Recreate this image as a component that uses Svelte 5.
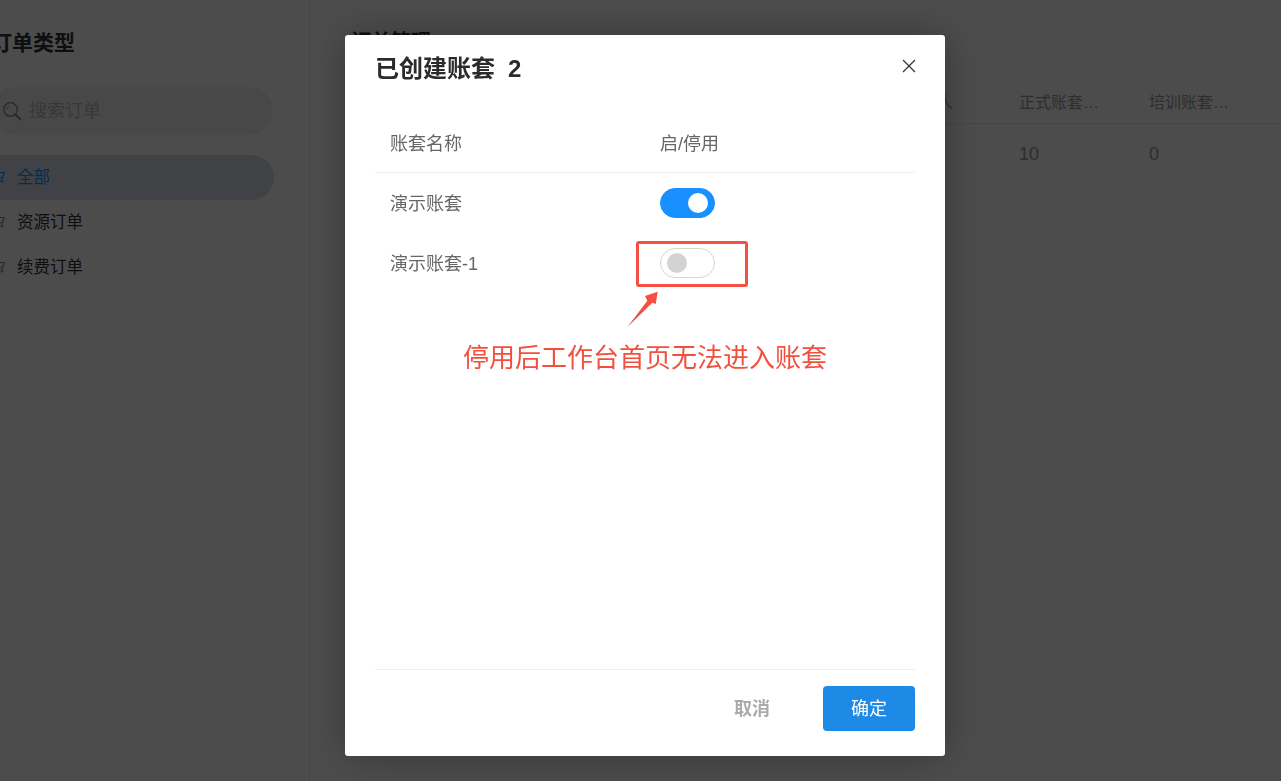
<script lang="ts">
	let books = $state([
		{ name: '演示账套', enabled: true },
		{ name: '演示账套-1', enabled: false }
	]);

	const sideItems = [
		{ label: '全部', active: true },
		{ label: '资源订单', active: false },
		{ label: '续费订单', active: false }
	];

	const columns = ['主联系人', '正式账套…', '培训账套…', '日'];
	const values = ['', '10', '0', ''];
</script>

<svelte:head>
	<title>已创建账套</title>
</svelte:head>

<div class="page">
	<aside class="sidebar">
		<h2 class="side-title">订单类型</h2>
		<div class="search">
			<svg class="search-icon" width="20" height="20" viewBox="0 0 20 20" fill="none">
				<circle cx="8.5" cy="8.5" r="6.8" stroke="currentColor" stroke-width="1.3" />
				<path d="M13.5 13.5l5 5" stroke="currentColor" stroke-width="1.8" stroke-linecap="round" />
				<path d="M4.8 8.5c0-1.6.8-2.8 2-3.4" stroke="currentColor" stroke-width="1" />
			</svg>
			<span>搜索订单</span>
		</div>
		<ul class="side-list">
			{#each sideItems as item}
				<li class="side-item" class:active={item.active}>
					<svg width="16" height="16" viewBox="0 0 16 16" fill="none">
						<path d="M1 2.5h2.5l1.5 7.5h7.5l1.5-5.5H4" stroke="currentColor" stroke-width="1.2" />
						<circle cx="6" cy="13" r="1.2" stroke="currentColor" />
						<circle cx="12" cy="13" r="1.2" stroke="currentColor" />
					</svg>
					<span>{item.label}</span>
				</li>
			{/each}
		</ul>
	</aside>

	<main class="content">
		<h1 class="content-title">订单管理</h1>
		<div class="table-row table-head">
			{#each columns as col}
				<div class="cell">{col}</div>
			{/each}
		</div>
		<div class="table-row table-body">
			{#each values as value}
				<div class="cell">{value}</div>
			{/each}
		</div>
	</main>
</div>

<div class="overlay">
	<div class="modal">
		<header class="modal-head">
			<h3 class="modal-title">已创建账套<span class="count">2</span></h3>
			<button type="button" class="close" aria-label="关闭">
				<svg width="14" height="14" viewBox="0 0 14 14" fill="none">
					<path d="M1 1l12 12M13 1L1 13" stroke="currentColor" stroke-width="1.2" />
				</svg>
			</button>
		</header>

		<div class="books">
			<div class="book-row book-head">
				<div class="book-name">账套名称</div>
				<div>启/停用</div>
			</div>
			{#each books as book}
				<div class="book-row">
					<div class="book-name"><span class="lift">{book.name}</span></div>
					<button
						type="button"
						class="switch"
						class:on={book.enabled}
						role="switch"
						aria-checked={book.enabled}
						aria-label={book.name}
						onclick={() => (book.enabled = !book.enabled)}
					>
						<span class="knob"></span>
					</button>
				</div>
			{/each}
		</div>

		<footer class="modal-foot">
			<button type="button" class="btn btn-cancel">取消</button>
			<button type="button" class="btn btn-ok">确定</button>
		</footer>

		<!-- Red annotation drawn over the dialog -->
		<div class="mark-box"></div>
		<svg class="mark-arrow" width="40" height="44" viewBox="0 0 40 44">
			<polygon points="0.3,39.3 20.3,12.7 18,8 30.7,3.7 28.7,16 25.3,14.7" fill="#f44f42" />
		</svg>
		<p class="mark-text">停用后工作台首页无法进入账套</p>
	</div>
</div>

<style>
	:global(body) {
		margin: 0;
		background: #fff;
		font-family: 'Liberation Sans', 'Noto Sans CJK SC', sans-serif;
	}

	.page {
		display: flex;
		height: 100vh;
		overflow: hidden;
		color: #333;
	}

	.sidebar {
		flex: 0 0 310px;
		box-sizing: border-box;
		border-right: 1px solid #e6e6e6;
		overflow: hidden;
	}

	.side-title {
		margin: 28px 0 0 -9px;
		font-size: 21px;
		line-height: 30px;
		font-weight: 700;
	}

	.search {
		display: flex;
		align-items: center;
		gap: 7px;
		width: 283px;
		height: 48px;
		margin: 29px 0 0 -10px;
		padding: 0 0 0 12px;
		box-sizing: border-box;
		border-radius: 24px;
		background: #f0f0f0;
		color: #bbb;
		font-size: 18px;
	}

	.search span {
		margin-top: -4px;
	}

	.search-icon {
		color: #888;
		flex-shrink: 0;
	}

	.side-list {
		list-style: none;
		margin: 20px 0 0;
		padding: 0;
	}

	.side-item {
		display: flex;
		align-items: center;
		gap: 11px;
		width: 284px;
		height: 45px;
		margin-left: -10px;
		box-sizing: border-box;
		border-radius: 0 23px 23px 0;
		font-size: 16.5px;
		padding: 0 0 3px 10px;
	}

	.side-item svg {
		flex-shrink: 0;
		color: #888;
		margin-left: -10px;
	}

	.side-item.active {
		background: #d6deec;
		color: #1890ff;
	}

	.side-item.active svg {
		color: #1890ff;
	}

	.content {
		flex: 1;
		min-width: 0;
		padding-left: 41px;
		overflow: hidden;
	}

	.content-title {
		margin: 28px 0 0;
		font-size: 20px;
		line-height: 28px;
		font-weight: 700;
	}

	.table-row {
		display: flex;
		padding-left: 538px;
		white-space: nowrap;
	}

	.cell {
		flex: 0 0 130px;
		font-size: 16px;
	}

	.table-head {
		margin-top: 31px;
		height: 36px;
		line-height: 32px;
		border-bottom: 1px solid #e8e8e8;
		color: #999;
	}

	.table-body {
		height: 60px;
		line-height: 60px;
		color: #999;
	}

	.table-body .cell {
		font-size: 18px;
	}

	.overlay {
		position: fixed;
		inset: 0;
		background: rgba(0, 0, 0, 0.7);
	}

	.modal {
		position: absolute;
		left: 345px;
		top: 35px;
		width: 600px;
		height: 721px;
		box-sizing: border-box;
		padding: 0 30px 25px;
		display: flex;
		flex-direction: column;
		background: #fff;
		border-radius: 3px;
		box-shadow: 0 0 40px rgba(0, 0, 0, 0.3);
		color: #666;
	}

	.modal-head {
		display: flex;
		align-items: center;
		justify-content: space-between;
		height: 62px;
	}

	.modal-title {
		margin: 0;
		font-size: 24px;
		font-weight: 700;
		color: #2b2b2b;
	}

	.count {
		margin-left: 13px;
	}

	.close {
		display: flex;
		margin: 0;
		padding: 0;
		border: none;
		background: none;
		color: #333;
		cursor: pointer;
		position: relative;
		left: 1px;
	}

	.books {
		flex: 1;
		margin-top: 18px;
	}

	.book-row {
		display: flex;
		align-items: center;
		height: 60px;
		font-size: 18px;
	}

	.book-head {
		height: 58px;
		box-sizing: border-box;
		padding-bottom: 4px;
		border-bottom: 1px solid #eee;
	}

	.lift {
		display: block;
		margin-top: -2px;
	}

	.book-name {
		flex: 0 0 270px;
		padding-left: 15px;
	}

	.switch {
		position: relative;
		width: 55px;
		height: 30px;
		padding: 0;
		box-sizing: border-box;
		border: 1px solid #d5d5d5;
		border-radius: 15px;
		background: #fff;
		cursor: pointer;
	}

	.switch.on {
		border-color: #1890ff;
		background: #1890ff;
	}

	.knob {
		position: absolute;
		left: 6px;
		top: 4px;
		width: 20px;
		height: 20px;
		border-radius: 50%;
		background: #d3d3d3;
	}

	.switch.on .knob {
		left: 27px;
		background: #fff;
	}

	.modal-foot {
		display: flex;
		justify-content: flex-end;
		gap: 25px;
		padding-top: 16px;
		border-top: 1px solid #eee;
	}

	.btn {
		width: 92px;
		height: 45px;
		padding: 0 0 4px;
		border: none;
		border-radius: 4px;
		font: inherit;
		font-size: 18px;
		cursor: pointer;
	}

	.btn-cancel {
		background: none;
		color: #aaa;
		font-weight: 700;
	}

	.btn-ok {
		background: #1d8ae6;
		color: #fff;
	}

	.mark-box {
		position: absolute;
		left: 291px;
		top: 206px;
		width: 112px;
		height: 46px;
		box-sizing: border-box;
		border: 3px solid #f44f42;
		border-radius: 3px;
	}

	.mark-arrow {
		position: absolute;
		left: 282px;
		top: 253px;
	}

	.mark-text {
		position: absolute;
		left: 118px;
		top: 304px;
		margin: 0;
		font-size: 26px;
		line-height: 38px;
		white-space: nowrap;
		color: #f2503f;
	}
</style>
